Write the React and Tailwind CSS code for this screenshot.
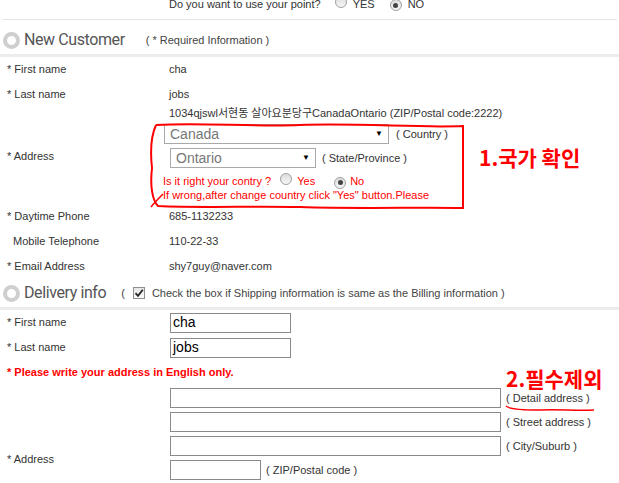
import React from 'react';

const Radio = ({ checked }) => (
  <span className="inline-flex items-center justify-center w-[12px] h-[12px] rounded-full border border-[#a0a0a0] bg-gradient-to-b from-[#dcdcdc] to-[#f7f7f7] shrink-0">
    {checked && <span className="w-[5px] h-[5px] rounded-full bg-[#444]" />}
  </span>
);

const Ring = () => (
  <span className="inline-block w-[17px] h-[17px] rounded-full border-[4px] border-[#cfcfcf] bg-white shrink-0" />
);

const Select = ({ value, className }) => (
  <div className={`h-[20px] border border-[#a9a9a9] bg-white flex items-center justify-between pl-[5px] pr-[5px] ${className}`}>
    <span className="text-[14px] text-[#777] leading-none">{value}</span>
    <span className="text-[8px] text-black leading-none">▼</span>
  </div>
);

const Row = ({ label, value, indent }) => (
  <div className="flex items-center h-[25px]">
    <div className={`w-[162px] ${indent ? 'pl-[13px]' : 'pl-[7px]'}`}>{label}</div>
    <div className="pl-[7px]">{value}</div>
  </div>
);

const Field = ({ w }) => <div className={`h-[20px] border border-[#8a8a8a] bg-white ${w}`} />;

const headFont = "ml-[4px] text-[16px] tracking-[-0.4px] text-[#555] font-['Roboto',sans-serif]";

export default function App() {
  return (
    <div className="relative w-[619px] h-[483px] overflow-hidden bg-white text-[11px] text-[#333] font-['Liberation_Sans',Arial,sans-serif]">
      {/* point question */}
      <div className="flex h-[20px] border-b border-[#e6e6e6] mx-[2px]">
        <div className="flex items-center h-[20px] -mt-[6px] pl-[167px]">
          <span>Do you want to use your point?</span>
          <span className="ml-[14px]"><Radio /></span>
          <span className="ml-[6px]">YES</span>
          <span className="ml-[15px]"><Radio checked /></span>
          <span className="ml-[6px]">NO</span>
        </div>
      </div>

      {/* New Customer header */}
      <div className="h-[37px] pt-[6px] flex items-center border-b-[3px] border-[#ececec] pl-[3px]">
        <Ring />
        <span className={headFont}>New Customer</span>
        <span className="ml-[21px] text-[#444]">( * Required Information )</span>
      </div>

      <Row label="* First name" value="cha" />
      <Row label="* Last name" value="jobs" />

      {/* address block */}
      <div className="flex h-[97px]">
        <div className="w-[162px] pl-[7px] pt-[41px]">* Address</div>
        <div className="flex flex-col">
          <div className="pl-[7px] h-[13px] leading-[13px] font-['Liberation_Sans','Noto_Sans_CJK_KR',sans-serif]">
            1034qjswl서현동 살아요분당구CanadaOntario (ZIP/Postal code:2222)
          </div>
          <div className="flex items-center mt-[4px] ml-[2px]">
            <Select value="Canada" className="w-[225px]" />
            <span className="ml-[7px]">( Country )</span>
          </div>
          <div className="flex items-center mt-[4px] ml-[8px]">
            <Select value="Ontario" className="w-[146px]" />
            <span className="ml-[6px]">( State/Province )</span>
          </div>
          <div className="flex items-center mt-[7px] text-[#ff0000] h-[13px]">
            <span className="ml-[1px]">Is it right your contry ?</span>
            <span className="ml-[9px]"><Radio /></span>
            <span className="ml-[5px]">Yes</span>
            <span className="ml-[19px]"><Radio checked /></span>
            <span className="ml-[4px]">No</span>
          </div>
          <div className="ml-[1px] mt-[1px] text-[#ff0000] leading-[13px]">
            If wrong,after change country click "Yes" button.Please
          </div>
        </div>
      </div>

      <Row label="* Daytime Phone" value="685-1132233" />
      <Row label="Mobile Telephone" value="110-22-33" indent />
      <Row label="* Email Address" value="shy7guy@naver.com" />

      {/* Delivery header */}
      <div className="h-[31px] flex items-center border-b-[3px] border-[#ececec] pl-[3px]">
        <Ring />
        <span className={headFont}>Delivery info</span>
        <span className="ml-[15px] text-[#444]">(</span>
        <span className="ml-[8px] w-[12px] h-[12px] border border-[#8f8f8f] bg-gradient-to-b from-[#e6e6e6] to-[#fafafa] flex items-center justify-center">
          <svg width="10" height="10" viewBox="0 0 10 10">
            <path d="M1.5 5.2 L4 7.8 L8.8 1.8" fill="none" stroke="#222" strokeWidth="1.8" />
          </svg>
        </span>
        <span className="ml-[7px] text-[#444]">Check the box if Shipping information is same as the Billing information )</span>
      </div>

      <div className="flex items-center h-[25px]">
        <div className="w-[170px] pl-[7px]">* First name</div>
        <div className="w-[121px] h-[20px] border border-[#8a8a8a] pl-[2px] flex items-center text-[14px] text-black">cha</div>
      </div>
      <div className="flex items-center h-[25px]">
        <div className="w-[170px] pl-[7px]">* Last name</div>
        <div className="w-[121px] h-[20px] border border-[#8a8a8a] pl-[2px] flex items-center text-[14px] text-black">jobs</div>
      </div>
      <div className="flex items-center h-[25px] pl-[7px] font-bold text-[#ff0000]">
        * Please write your address in English only.
      </div>

      <div className="flex pt-[3px]">
        <div className="w-[170px] pl-[7px] pt-[63px]">* Address</div>
        <div className="flex flex-col gap-[4px]">
          <div className="flex items-center">
            <Field w="w-[331px]" />
            <span className="ml-[5px]">( Detail address )</span>
          </div>
          <div className="flex items-center">
            <Field w="w-[331px]" />
            <span className="ml-[5px]">( Street address )</span>
          </div>
          <div className="flex items-center">
            <Field w="w-[331px]" />
            <span className="ml-[5px]">( City/Suburb )</span>
          </div>
          <div className="flex items-center">
            <Field w="w-[91px]" />
            <span className="ml-[5px]">( ZIP/Postal code )</span>
          </div>
        </div>
      </div>

      {/* red hand-drawn annotations */}
      <svg className="absolute left-0 top-0 pointer-events-none" width="619" height="483">
        <path
          d="M156,125 C200,122 250,127 300,125 C360,123 420,128 463,126 L463,208 C420,207 360,209 300,207 C250,206 200,208 158,206 C152,200 150,185 152,168 C150,150 151,136 156,125"
          fill="none" stroke="#ff0000" strokeWidth="2"
        />
        <path d="M151,207 C154,203 158,199 163,194" fill="none" stroke="#ff0000" strokeWidth="1.5" />
        <path d="M506,406 C509,409 520,410 540,410 C560,409 575,411 594,410" fill="none" stroke="#ff0000" strokeWidth="1.5" />
      </svg>
      <div className="absolute left-[479px] top-[147px] text-[21px] leading-none font-bold text-[#ff0000] font-['Noto_Sans_CJK_KR',sans-serif]">
        1.국가 확인
      </div>
      <div className="absolute left-[506px] top-[368px] text-[21px] leading-none font-bold text-[#ff0000] font-['Noto_Sans_CJK_KR',sans-serif]">
        2.필수제외
      </div>
    </div>
  );
}
